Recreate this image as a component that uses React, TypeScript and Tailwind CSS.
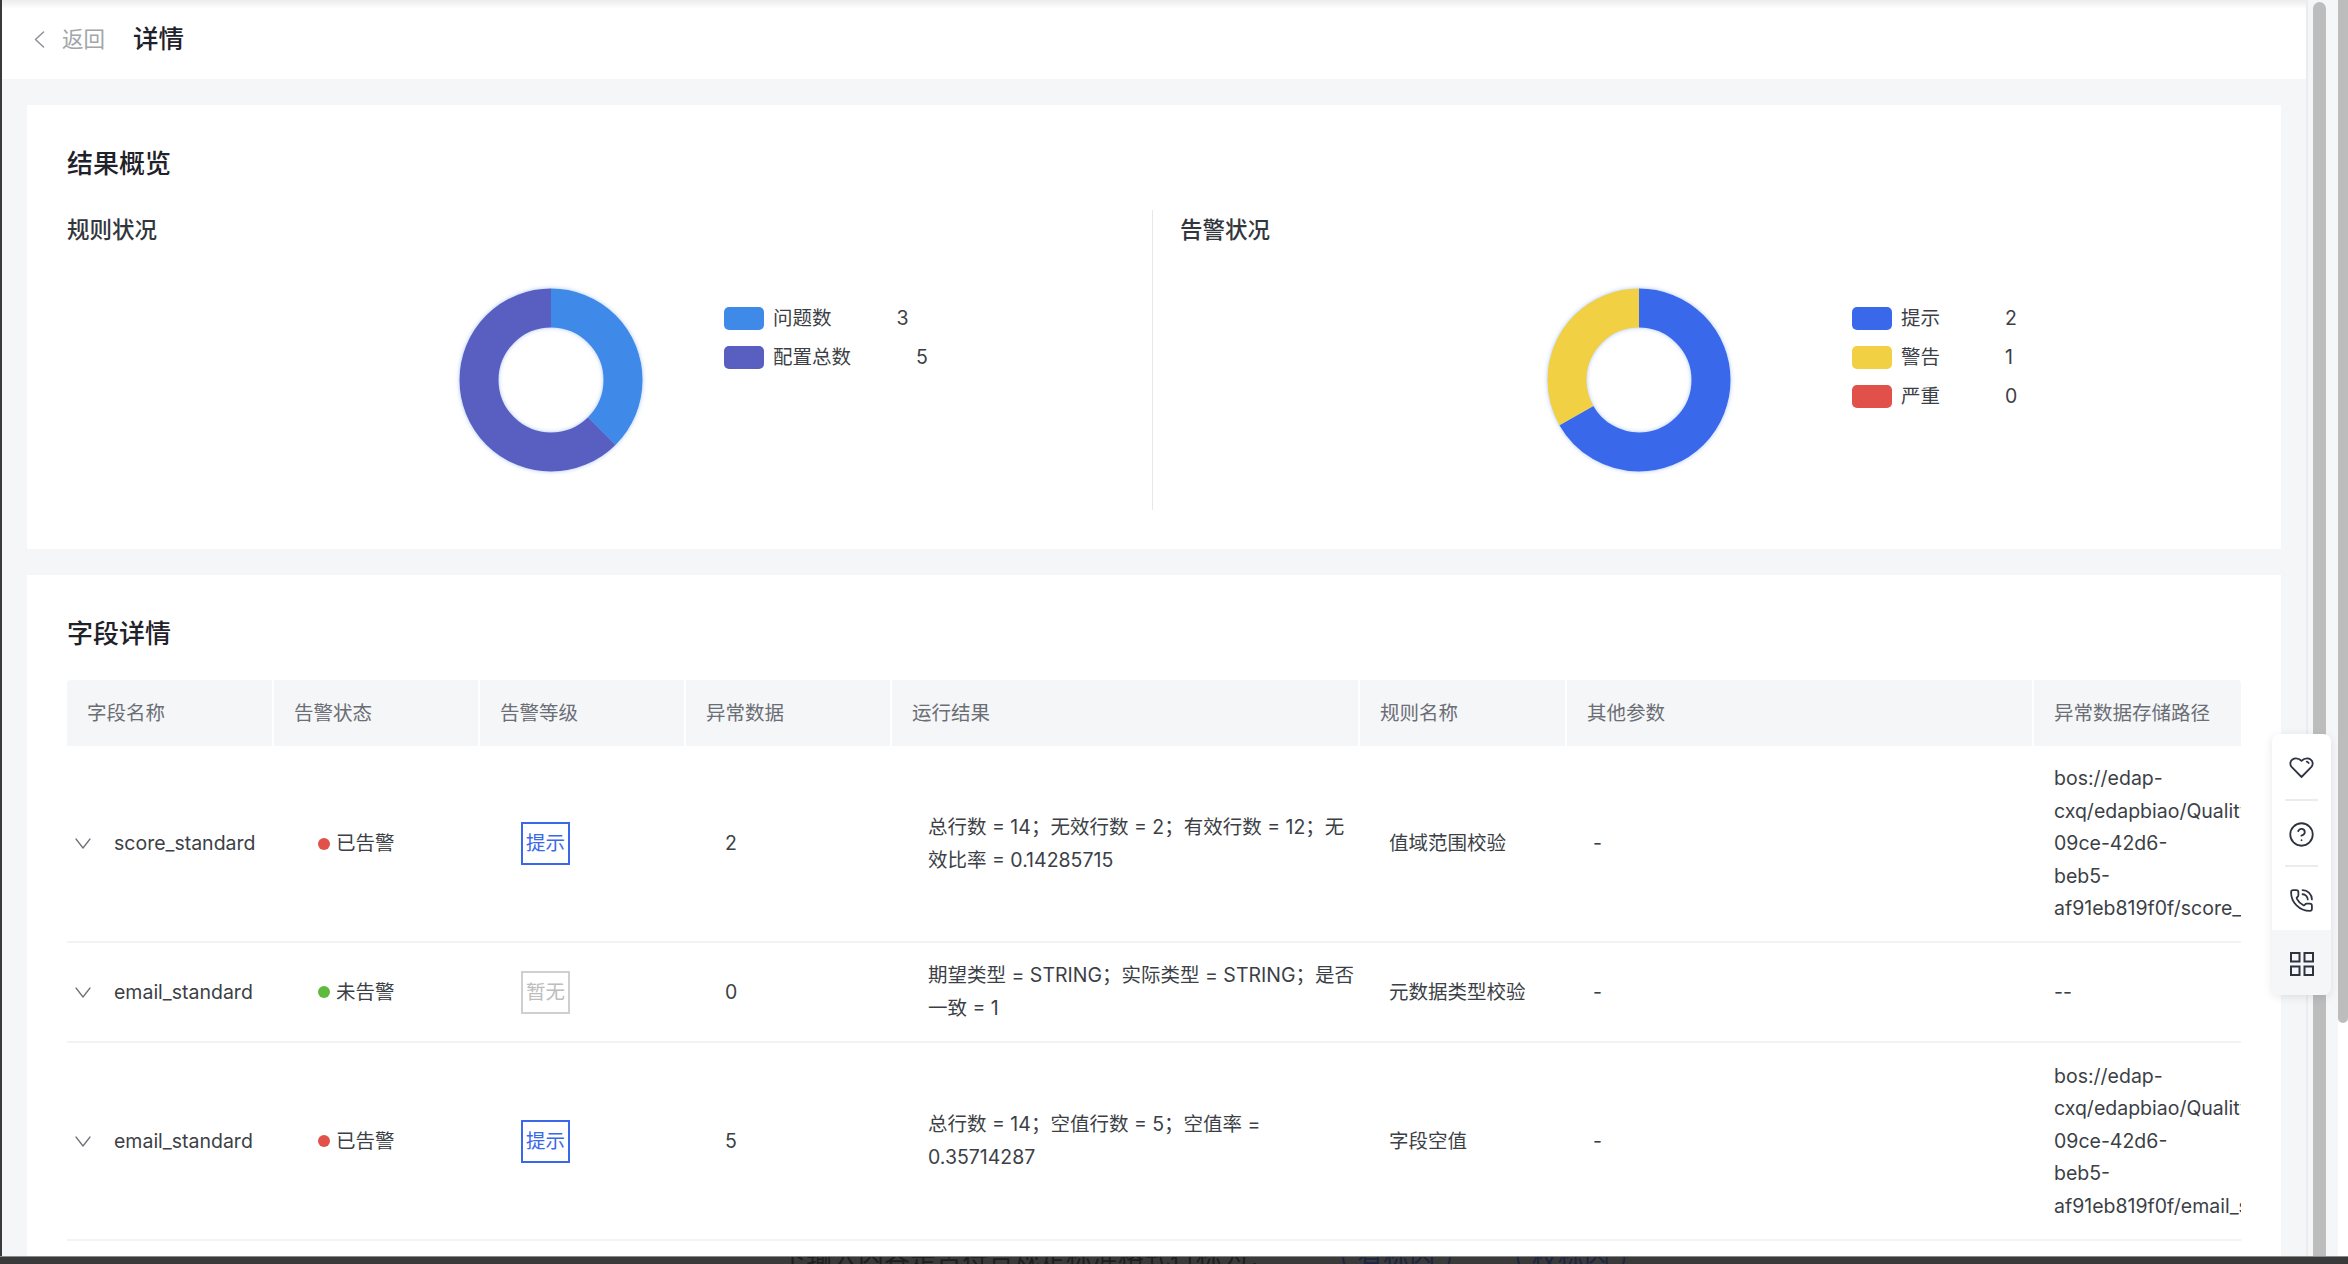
import React from "react";
import { CircleHelp, PhoneCall } from "lucide-react";

const FONT = "font-['Inter','Noto_Sans_CJK_SC',sans-serif]";

function Donut({ segments }: { segments: { color: string; frac: number }[] }) {
  const r = 72;
  const c = 2 * Math.PI * r;
  let offset = 0;
  return (
    <svg width="184" height="184" viewBox="-92 -92 184 184" className="shrink-0 drop-shadow-[0_0_2px_rgba(90,140,235,0.5)]">
      <g transform="rotate(-90)">
        {segments.map((s, i) => {
          const el = (
            <circle
              key={i}
              r={r}
              fill="none"
              stroke={s.color}
              strokeWidth="39"
              strokeDasharray={`${s.frac * c} ${c}`}
              strokeDashoffset={-offset * c}
            />
          );
          offset += s.frac;
          return el;
        })}
      </g>
    </svg>
  );
}

function Legend({ items }: { items: { color: string; label: string; value: string }[] }) {
  return (
    <div className="flex flex-col gap-4">
      {items.map((it) => (
        <div key={it.label} className="flex items-center h-[23px] text-[19.5px] text-[#3c3f46]">
          <span className="w-10 h-[23px] rounded-[5px] shrink-0" style={{ backgroundColor: it.color }} />
          <span className="ml-[9px]">{it.label}</span>
          <span className="ml-[65px]">{it.value}</span>
        </div>
      ))}
    </div>
  );
}

const headers = ["字段名称", "告警状态", "告警等级", "异常数据", "运行结果", "规则名称", "其他参数", "异常数据存储路径"];
const GRID = "grid grid-cols-[207px_206px_206px_206px_468px_207px_467px_207px]";

type Row = {
  h: string;
  name: string;
  on: boolean;
  tag: boolean;
  count: string;
  result: string[];
  rule: string;
  path: string[];
};

const rows: Row[] = [
  {
    h: "h-[197px]",
    name: "score_standard",
    on: true,
    tag: true,
    count: "2",
    result: ["总行数 = 14；无效行数 = 2；有效行数 = 12；无", "效比率 = 0.14285715"],
    rule: "值域范围校验",
    path: ["bos://edap-", "cxq/edapbiao/QualityRule", "09ce-42d6-", "beb5-", "af91eb819f0f/score_standard"],
  },
  {
    h: "h-[100px]",
    name: "email_standard",
    on: false,
    tag: false,
    count: "0",
    result: ["期望类型 = STRING；实际类型 = STRING；是否", "一致 = 1"],
    rule: "元数据类型校验",
    path: ["--"],
  },
  {
    h: "h-[198px]",
    name: "email_standard",
    on: true,
    tag: true,
    count: "5",
    result: ["总行数 = 14；空值行数 = 5；空值率 =", "0.35714287"],
    rule: "字段空值",
    path: ["bos://edap-", "cxq/edapbiao/QualityRule", "09ce-42d6-", "beb5-", "af91eb819f0f/email_standard"],
  },
];

function RowChevron() {
  return (
    <svg width="16" height="11" viewBox="0 0 16 11" fill="none" stroke="#70737a" strokeWidth="1.3" strokeLinecap="round" strokeLinejoin="round" className="shrink-0">
      <path d="M1 1l7 9 7-9" />
    </svg>
  );
}

function BackChevron() {
  return (
    <svg width="11" height="17" viewBox="0 0 11 17" fill="none" stroke="#8d9096" strokeWidth="1.5" strokeLinecap="round" strokeLinejoin="round" className="shrink-0">
      <path d="M9.5 1 1.5 8.5l8 7.5" />
    </svg>
  );
}

function HeartIcon() {
  return (
    <svg width="25" height="25" viewBox="0 0 25 25" fill="none" stroke="#2f3340" strokeWidth="1.8" strokeLinejoin="round" strokeLinecap="round">
      <path d="M12.5 22 2.6 11.8C.6 9.6 1 6.2 3.4 4.5c2.7-1.9 6.6-1 9.1 1.3 2.5-2.3 6.4-3.2 9.1-1.3 2.4 1.7 2.8 5.1.8 7.3L12.5 22Z" />
      <path d="M17.8 6.6c.8.2 1.4.7 1.8 1.4" />
    </svg>
  );
}

function GridIcon() {
  return (
    <svg width="24" height="24" viewBox="0 0 24 24" fill="none" stroke="#2f3340" strokeWidth="2">
      <rect x="1" y="1" width="8.5" height="8.5" />
      <rect x="14.5" y="1" width="8.5" height="8.5" />
      <rect x="1" y="14.5" width="8.5" height="8.5" />
      <rect x="14.5" y="14.5" width="8.5" height="8.5" />
    </svg>
  );
}

export default function App() {
  return (
    <div className={`relative h-screen w-full overflow-hidden flex flex-col bg-white ${FONT}`}>
      <div className="flex flex-1 min-h-0">
        <div className="w-[2px] shrink-0 bg-[#3a3a3a]" />
        <main className="flex-1 min-w-0 flex flex-col bg-[#f5f6f8] overflow-hidden">
          <header className="h-[79px] shrink-0 flex items-center bg-white bg-[linear-gradient(to_bottom,#ececec,#ffffff_9px)]">
            <span className="ml-[32px]">
              <BackChevron />
            </span>
            <span className="ml-[17px] text-[21.5px] text-[#a3a5a9]">返回</span>
            <span className="ml-[28px] text-[25.5px] font-medium text-[#1f222a]">详情</span>
          </header>

          <div className="flex-1 min-h-0 px-[25px] pt-[26px] flex flex-col gap-[26px]">
            <section className="h-[444px] shrink-0 bg-white pt-[41px] px-10">
              <h2 className="text-[26px] leading-[36px] font-medium text-[#1f222a] mb-[28px]">结果概览</h2>
              <div className="flex h-[300px]">
                <div className="w-[1086px] shrink-0 border-r border-[#e6e7ea] pt-[3px]">
                  <h3 className="text-[22.5px] leading-[34px] font-medium text-[#33363d]">规则状况</h3>
                  <div className="flex items-start mt-[41px] pl-[392px]">
                    <Donut segments={[{ color: "#3f8ae8", frac: 3 / 8 }, { color: "#585fc1", frac: 5 / 8 }]} />
                    <div className="ml-[81px] mt-[19px]">
                      <Legend
                        items={[
                          { color: "#3f8ae8", label: "问题数", value: "3" },
                          { color: "#585fc1", label: "配置总数", value: "5" },
                        ]}
                      />
                    </div>
                  </div>
                </div>
                <div className="flex-1 pl-[27px] pt-[3px]">
                  <h3 className="text-[22.5px] leading-[34px] font-medium text-[#33363d]">告警状况</h3>
                  <div className="flex items-start mt-[41px] pl-[367px]">
                    <Donut segments={[{ color: "#3968ea", frac: 2 / 3 }, { color: "#f2d043", frac: 1 / 3 }]} />
                    <div className="ml-[121px] mt-[19px]">
                      <Legend
                        items={[
                          { color: "#3968ea", label: "提示", value: "2" },
                          { color: "#f2d043", label: "警告", value: "1" },
                          { color: "#e2504a", label: "严重", value: "0" },
                        ]}
                      />
                    </div>
                  </div>
                </div>
              </div>
            </section>

            <section className="flex-1 min-h-0 bg-white pt-[41px] px-10">
              <h2 className="text-[26px] leading-[36px] font-medium text-[#1f222a] mb-[28px]">字段详情</h2>
              <div className={`${GRID} h-[66px] text-[19.5px] text-[#6b6e75] rounded-t-[4px] overflow-hidden`}>
                {headers.map((h, i) => (
                  <div key={h} className={`flex items-center pl-[20px] pt-[2px] bg-[#f5f6f8] ${i < 7 ? "border-r-2 border-white" : ""}`}>
                    {h}
                  </div>
                ))}
              </div>
              {rows.map((r, i) => (
                <div key={i} className={`${GRID} ${r.h} items-center border-b-2 border-[#f2f3f5] text-[19.5px] leading-[32.6px] text-[#3c3f46]`}>
                  <div className="flex items-center pl-[8px]">
                    <RowChevron />
                    <span className="ml-[23px] whitespace-nowrap">{r.name}</span>
                  </div>
                  <div className="flex items-center pl-[44px]">
                    <span className={`w-3 h-3 rounded-full shrink-0 ${r.on ? "bg-[#e2504a]" : "bg-[#5fba3c]"}`} />
                    <span className="ml-[6px]">{r.on ? "已告警" : "未告警"}</span>
                  </div>
                  <div className="pl-[41px]">
                    {r.tag ? (
                      <span className="flex items-center justify-center w-[49px] h-[43px] border-2 border-[#3968ea] text-[#3968ea]">提示</span>
                    ) : (
                      <span className="flex items-center justify-center w-[49px] h-[43px] border-2 border-[#cfcfcf] text-[#bdbdbd]">暂无</span>
                    )}
                  </div>
                  <div className="pl-[39px]">{r.count}</div>
                  <div className="pl-[36px] whitespace-nowrap">
                    {r.result.map((l) => (
                      <div key={l}>{l}</div>
                    ))}
                  </div>
                  <div className="pl-[29px] whitespace-nowrap">{r.rule}</div>
                  <div className="pl-[26px]">-</div>
                  <div className="pl-[20px] overflow-hidden whitespace-nowrap">
                    {r.path.map((l) => (
                      <div key={l}>{l}</div>
                    ))}
                  </div>
                </div>
              ))}
            </section>
          </div>
        </main>

        <div className="w-[32px] shrink-0 bg-[#f5f6f8] border-l-2 border-[#ececee] pl-[5px] pt-[2px]">
          <div className="w-[13px] h-full rounded-t-full bg-[#bdbdbd]" />
        </div>
        <div className="w-[10px] shrink-0 bg-white">
          <div className="h-[1023px] rounded-b-[5px] bg-[#bdbdbd]" />
        </div>
      </div>

      <div className="h-[8px] shrink-0 bg-[#3a3a3a] border-t border-[#8a8a8a] overflow-hidden">
        <div className="ml-[780px] -mt-[16px] flex items-center text-[26px] leading-[34px] text-[#1e1e20] whitespace-nowrap">
          <span>下输入内容是否符合规定标准格式行标为：</span>
          <span className="ml-[50px] text-[#1c2440]">（ 有标内 ）</span>
          <span className="ml-[30px] text-[#1c2440]">（ 校标内 ）</span>
        </div>
      </div>

      <aside className="absolute left-[2272px] top-[734px] w-[59px] h-[261px] rounded-[8px] bg-white shadow-[0_2px_10px_rgba(0,0,0,0.1)] overflow-hidden flex flex-col items-center">
        <div className="h-[65px] w-full flex items-center justify-center pt-[2px]">
          <HeartIcon />
        </div>
        <div className="w-[33px] h-[2px] bg-[#ececee]" />
        <div className="h-[64px] w-full flex items-center justify-center pt-[3px]">
          <CircleHelp size={27} strokeWidth={1.6} color="#2f3340" />
        </div>
        <div className="w-[33px] h-[2px] bg-[#ececee]" />
        <div className="h-[63px] w-full flex items-center justify-center pt-[4px]">
          <PhoneCall size={25} strokeWidth={1.7} color="#2f3340" />
        </div>
        <div className="flex-1 w-full bg-[#f5f6f8] flex items-center justify-center pt-[3px]">
          <GridIcon />
        </div>
      </aside>
    </div>
  );
}
